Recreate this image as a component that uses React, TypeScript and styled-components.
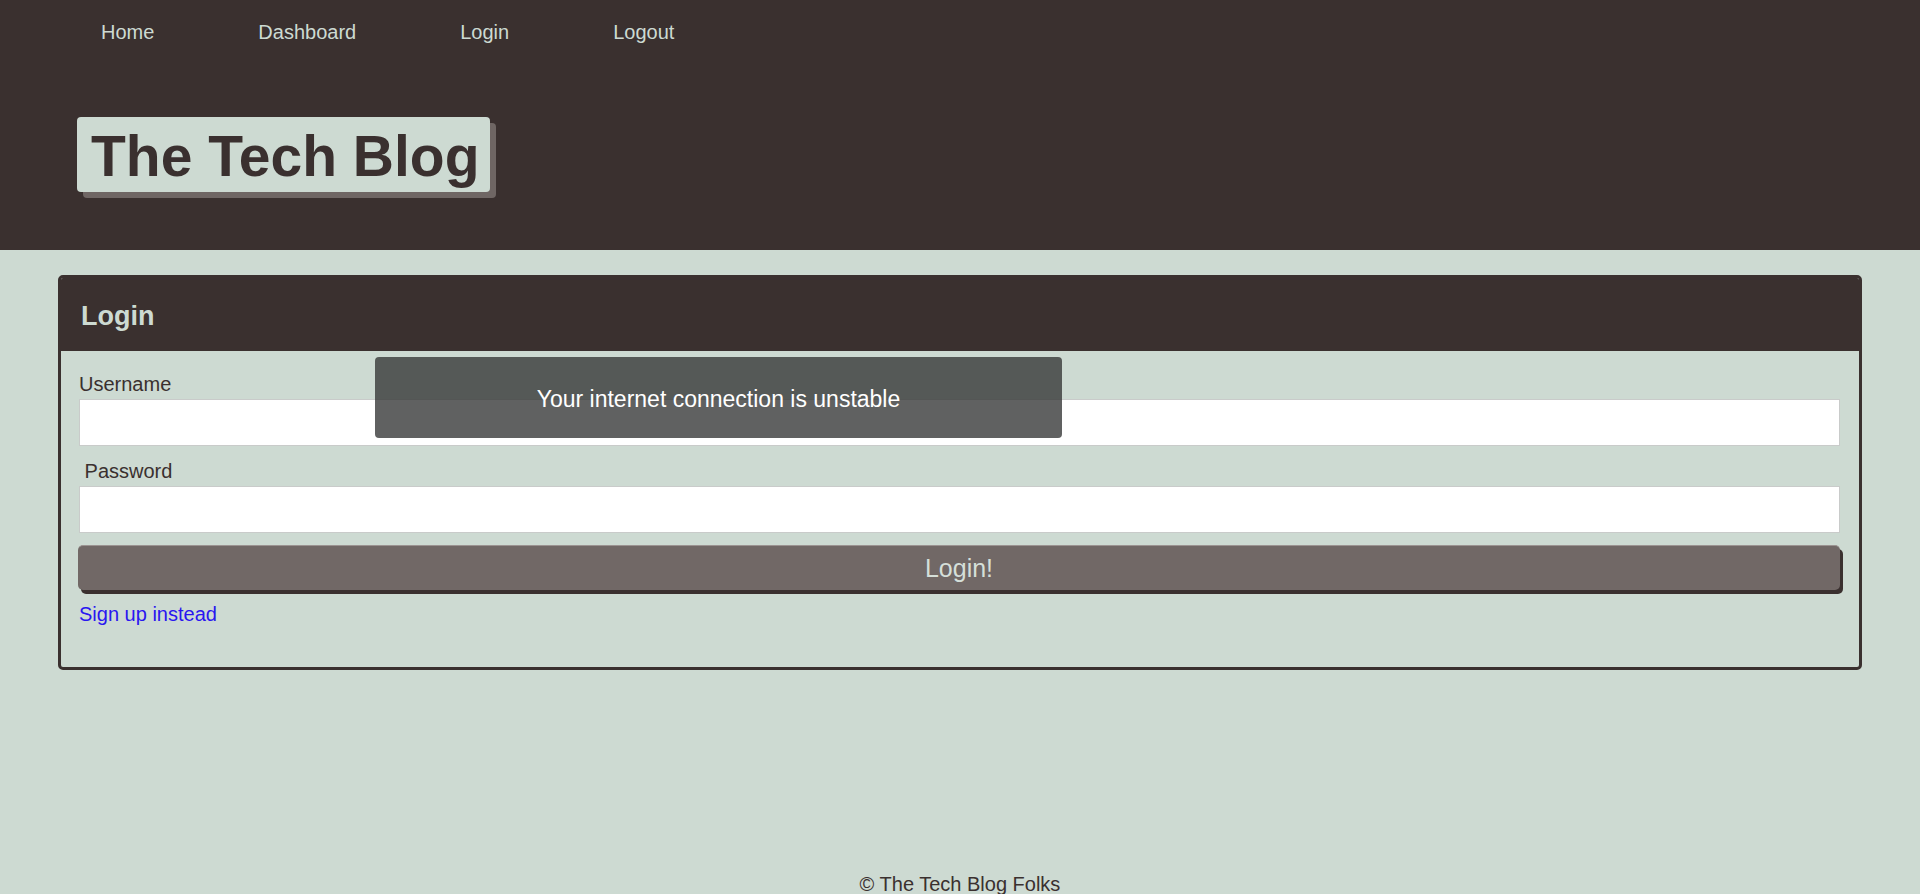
import React from "react";
import styled, { createGlobalStyle } from "styled-components";

const dark = "#3a302f";
const sage = "#cddad2";

const GlobalStyle = createGlobalStyle`
  html, body {
    margin: 0;
    padding: 0;
    background: ${sage};
    font-family: "Liberation Sans", Arial, sans-serif;
    overflow: hidden;
  }
  * { box-sizing: border-box; }
`;

const Page = styled.div`
  min-height: 100vh;
  display: flex;
  flex-direction: column;
  position: relative;
`;

const Header = styled.header`
  background: ${dark};
  height: 250px;
  padding: 21px 0 0 0;
`;

const Nav = styled.nav`
  display: flex;
  gap: 104px;
  padding-left: 101px;
`;

const NavLink = styled.a`
  color: ${sage};
  font-size: 20px;
  line-height: 23px;
  text-decoration: none;
`;

const LogoWrap = styled.div`
  margin: 73px 0 0 77px;
  display: flex;
`;

const Logo = styled.h1`
  margin: 0;
  height: 75px;
  padding: 3px 11px 0 14px;
  background: ${sage};
  color: ${dark};
  font-size: 57px;
  font-weight: 700;
  line-height: 72px;
  border-radius: 4px;
  box-shadow: 6px 6px 0 #6f6664;
  white-space: nowrap;
`;

const Main = styled.main`
  padding: 25px 58px 0;
`;

const Card = styled.section`
  border: 3px solid ${dark};
  border-radius: 5px;
  overflow: hidden;
`;

const CardHeader = styled.h2`
  margin: 0;
  background: ${dark};
  color: ${sage};
  font-size: 27px;
  font-weight: 700;
  line-height: 31px;
  padding: 23px 20px 19px;
`;

const CardBody = styled.form`
  display: flex;
  flex-direction: column;
  align-items: stretch;
  padding: 22px 19px 41px 18px;
`;

const Label = styled.label<{ $gap?: number }>`
  display: block;
  color: ${dark};
  font-size: 20px;
  line-height: 23px;
  margin-top: ${(p) => p.$gap ?? 0}px;
  white-space: pre;
`;

const Input = styled.input`
  display: block;
  height: 47px;
  margin-top: 3px;
  background: #fff;
  border: 1px solid #c9cbca;
  font-size: 18px;
  padding: 0 8px;
  outline: none;
`;

const Button = styled.button`
  margin-top: 12px;
  margin-left: -1px;
  height: 45px;
  background: #716866;
  color: #d5dfd9;
  border: none;
  border-top: 1px solid #9b9391;
  border-radius: 5px;
  box-shadow: 3px 4px 0 ${dark};
  font-family: "Liberation Sans", Arial, sans-serif;
  font-size: 25px;
  cursor: pointer;
`;

const SignUp = styled.a`
  display: block;
  margin-top: 13px;
  color: #2a16f0;
  font-size: 20px;
  line-height: 23px;
  text-decoration: none;
  align-self: flex-start;
`;

const Footer = styled.footer`
  margin-top: auto;
  text-align: center;
  color: ${dark};
  font-size: 20px;
  line-height: 20px;
`;

const Toast = styled.div`
  position: absolute;
  left: 375px;
  top: 357px;
  width: 687px;
  height: 81px;
  border-radius: 4px;
  background: rgba(51, 52, 52, 0.78);
  color: #ffffff;
  font-size: 23px;
  display: flex;
  align-items: center;
  justify-content: center;
  padding-top: 3px;
`;

export default function App() {
  return (
    <>
      <GlobalStyle />
      <Page>
        <Header>
          <Nav>
            <NavLink href="#">Home</NavLink>
            <NavLink href="#">Dashboard</NavLink>
            <NavLink href="#">Login</NavLink>
            <NavLink href="#">Logout</NavLink>
          </Nav>
          <LogoWrap>
            <Logo>The Tech Blog</Logo>
          </LogoWrap>
        </Header>
        <Main>
          <Card>
            <CardHeader>Login</CardHeader>
            <CardBody onSubmit={(e) => e.preventDefault()}>
              <Label htmlFor="username">Username</Label>
              <Input id="username" type="text" />
              <Label htmlFor="password" $gap={14}>{"\u00a0Password"}</Label>
              <Input id="password" type="password" />
              <Button type="submit">Login!</Button>
              <SignUp href="#">Sign up instead</SignUp>
            </CardBody>
          </Card>
        </Main>
        <Footer>© The Tech Blog Folks</Footer>
        <Toast>Your internet connection is unstable</Toast>
      </Page>
    </>
  );
}
